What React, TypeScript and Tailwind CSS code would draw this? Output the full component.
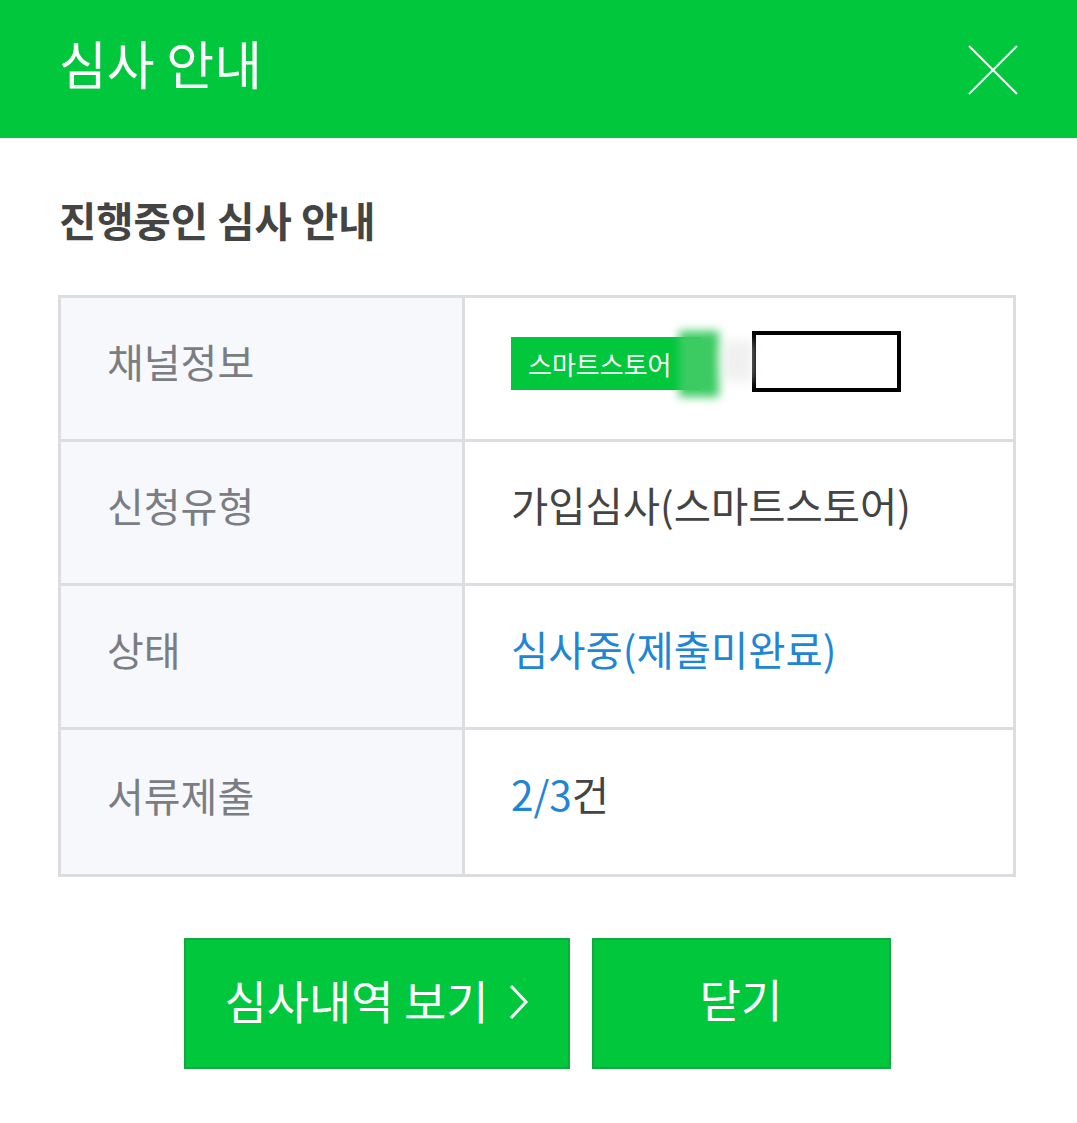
import React from "react";

const font = { fontFamily: '"Noto Sans CJK KR", "Noto Sans", sans-serif' };

function Row({ label, children, last }: { label: string; children: React.ReactNode; last?: boolean }) {
  return (
    <div className={`flex h-[144px] ${last ? "" : "border-b-[3px] border-[#dcdde1]"}`}>
      <div className="w-[404px] shrink-0 bg-[#f7f8fc] border-r-[3px] border-[#dcdde1] flex items-center pl-[46px] pb-[14px] text-[40px] text-[#7a7d82]">
        {label}
      </div>
      <div className="flex-1 flex items-center pl-[46px] pb-[14px] text-[40.5px] text-[#444]">{children}</div>
    </div>
  );
}

export default function App() {
  return (
    <div className="w-[1077px] h-[1123px] bg-white" style={font}>
      <div className="h-[138px] bg-[#00c73c] flex items-center justify-between pl-[59px] pr-[59px]">
        <div className="text-[52px] text-white leading-none pb-[12px]">심사 안내</div>
        <svg width="50" height="50" viewBox="0 0 50 50" className="mt-[2px]">
          <line x1="1" y1="1" x2="49" y2="49" stroke="white" strokeWidth="2" />
          <line x1="49" y1="1" x2="1" y2="49" stroke="white" strokeWidth="2" />
        </svg>
      </div>
      <div className="pl-[58px] pr-[61px]">
        <div className="pt-[62px] pl-[1px] text-[40.5px] font-bold text-[#444] leading-none">진행중인 심사 안내</div>
        <div className="mt-[54px] border-[3px] border-[#dcdde1]">
          <Row label="채널정보">
            <div className="flex items-center">
              <div className="relative w-[190px] h-[53px] bg-[#00c73c] overflow-visible mt-[4px]">
                <div className="w-[168px] overflow-hidden whitespace-nowrap pl-[17px] text-[26px] leading-[53px] text-white">
                  스마트스토어
                </div>
                <div className="absolute left-[168px] top-[-6px] w-[40px] h-[66px] bg-[#3ccb63] blur-[5px]" />
              </div>
              <div className="w-[30px] h-[40px] ml-[22px] bg-[#e6e6e6] blur-[6px] opacity-60" />
              <div className="w-[149px] h-[61px] border-[4px] border-black bg-white -ml-[1px]" />
            </div>
          </Row>
          <Row label="신청유형">가입심사(스마트스토어)</Row>
          <Row label="상태">
            <span className="text-[#1f86d6]">심사중(제출미완료)</span>
          </Row>
          <Row label="서류제출" last>
            <span>
              <span className="text-[#1f86d6]">2/3</span>건
            </span>
          </Row>
        </div>
        <div className="mt-[61px] flex justify-center gap-[22px]">
          <button className="w-[386px] h-[131px] bg-[#00c73c] border-2 border-[#14a842] text-white text-[46px] flex items-center justify-center pb-[8px]" style={font}>
            <span>심사내역 보기</span>
            <svg width="20" height="36" viewBox="0 0 20 36" className="ml-[20px] mt-[6px]">
              <polyline points="2,2 17,18 2,34" fill="none" stroke="white" strokeWidth="3" />
            </svg>
          </button>
          <button className="w-[299px] h-[131px] bg-[#00c73c] border-2 border-[#14a842] text-white text-[45px] flex items-center justify-center pb-[8px]" style={font}>
            닫기
          </button>
        </div>
      </div>
    </div>
  );
}
